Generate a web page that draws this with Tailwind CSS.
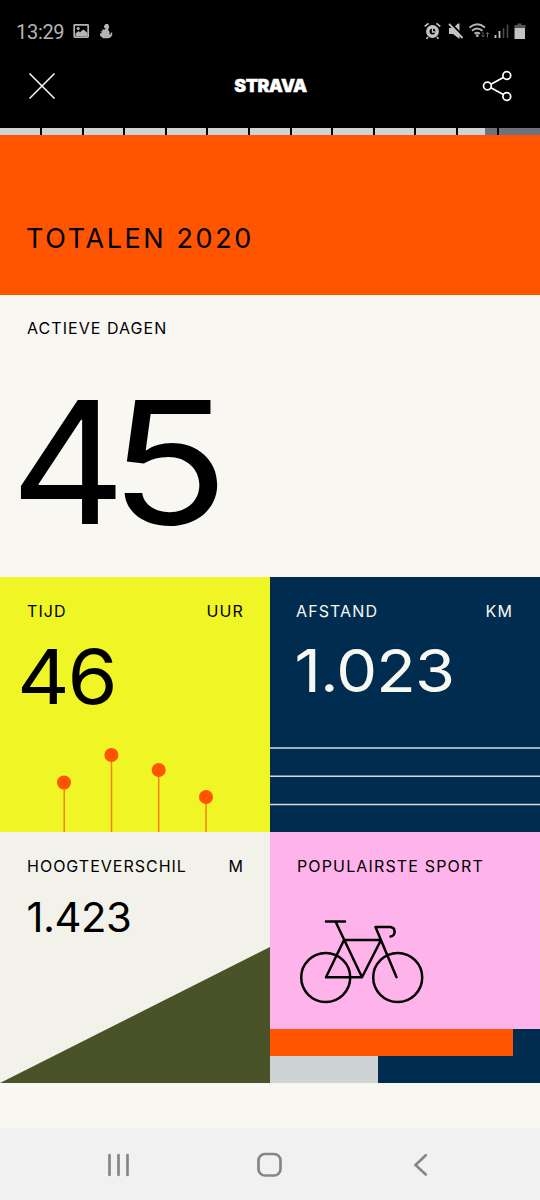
<!DOCTYPE html>
<html lang="nl">
<head>
<meta charset="utf-8">
<meta name="viewport" content="width=device-width">
<title>Strava – Totalen 2020</title>
<script src="https://cdn.jsdelivr.net/npm/@tailwindcss/browser@4"></script>
</head>
<body class="bg-[#f8f7f2]">
<div class="w-[540px] h-[1200px] flex flex-col overflow-hidden bg-[#f8f7f2] text-black font-['Inter',sans-serif] whitespace-nowrap">
  <!-- status bar -->
  <div class="h-[60px] shrink-0 bg-black flex justify-between pl-4 pr-[14px] text-[#b4b4b4]">
    <div class="flex">
      <span class="font-['Roboto',sans-serif] text-[20px] leading-[24px] mt-[20px] w-[56px] tracking-[-0.3px]">13:29</span>
      <svg class="mt-[23px] ml-px" width="17" height="16" viewBox="0 0 17 16"><rect x="1.2" y="1.9" width="14" height="12.3" rx=".6" fill="none" stroke="currentColor" stroke-width="1.7"/><path d="M2.5 12v-1.5l3-2.5 1.5 1.3L10.500 6.500l4 3.500v3h-12z" fill="currentColor"/><circle cx="5.200" cy="5.500" r="1.500" fill="currentColor"/></svg>
      <svg class="mt-[23px] ml-[9px]" width="14" height="16" viewBox="0 0 14 16"><path d="M5 3 6.500 1h2.500l1 2v2L9 6.500 10.500 9v2.500h1l.5-2 1.200 0v2.500L11.500 14.500 9 15.200H4L1 12.500V10.500L3 10 1.500 8.500 3.500 8 3 6.500 6 6.500 6.500 5.500 5 4.500z" fill="currentColor"/></svg>
    </div>
    <svg class="mt-[20px]" width="104" height="22" viewBox="0 0 104 22" fill="none">
      <g stroke="#c4c4c4"><circle cx="10.500" cy="11.500" r="4.700" stroke-width="3.400"/><path d="M10.500 8v4h3" stroke-width="1.300"/><path d="M2.700 6.300 6.500 3.300M18.300 6.300 14.500 3.300M6 17l-1.500 1.700M15 17l1.500 1.700" stroke-width="1.700"/></g>
      <path d="M27 8h4l5-4.500h1.500v15.500L31 14h-4z" fill="#c4c4c4"/><path d="M28.500 3 42.500 17.500" stroke="#000" stroke-width="2"/><path d="M27 3.800 40.500 18" stroke="#c4c4c4" stroke-width="1.900"/>
      <g stroke="#b4b4b4" stroke-width="1.900"><path d="M47.500 7.500q7.500-6.500 15.500 0M50 10.700q5-4.500 10.500 0M52.500 13.800q2.700-2.300 5.500 0"/></g><circle cx="55.300" cy="15.700" r="1.400" fill="#b4b4b4"/>
      <path d="M61 12v5M59.500 15.500 61 17l1.500-1.500M65.500 17.500v-5M64 14l1.500-1.500L67 14" stroke="#666"/>
      <path d="M73.500 15v3M77.500 11v7" stroke="#c4c4c4" stroke-width="1.800"/><path d="M81.500 8V18M85.500 4.500V18" stroke="#4b4b4b" stroke-width="1.600"/>
      <path d="M92.500 5h3V3.500h4V5h4v3h-11z" fill="#555"/><path d="M92.500 8h10.500v11H92.500z" fill="#c4c4c4"/>
    </svg>
  </div>
  <!-- app bar -->
  <header class="h-[68px] shrink-0 bg-black text-white flex justify-between pl-[28px] pr-[28px]">
    <svg class="mt-[12px]" width="28" height="28" viewBox="0 0 28 28"><path d="M1.500 1.500 26.500 26.500M26.500 1.500 1.500 26.500" stroke="#fff" stroke-width="1.500"/></svg>
    <div class="mt-[16px] ml-[5px] text-[17.500px] leading-[20px] font-black tracking-[-0.5px] scale-x-102 [-webkit-text-stroke:0.4px_white]">STRAVA</div>
    <svg class="mt-[10px]" width="32" height="32" viewBox="0 0 32 32" fill="none" stroke="#fff" stroke-width="1.700"><circle cx="7.400" cy="16" r="3.900"/><circle cx="26.800" cy="5.500" r="3.900"/><circle cx="26.800" cy="26.500" r="3.900"/><path d="M10.900 14.200 23.300 7.400M10.900 17.800l12.400 6.800"/></svg>
  </header>
  <!-- story progress -->
  <div class="h-[7px] w-[541px] pl-[0.500px] shrink-0 grid grid-cols-13 bg-[#ced4d3]">
    <i class="border-r-2 border-black"></i><i class="border-r-2 border-black"></i><i class="border-r-2 border-black"></i><i class="border-r-2 border-black"></i><i class="border-r-2 border-black"></i><i class="border-r-2 border-black"></i><i class="border-r-2 border-black"></i><i class="border-r-2 border-black"></i><i class="border-r-2 border-black"></i><i class="border-r-2 border-black"></i><i class="border-r-2 border-black"></i><i class="border-r-2 border-black flex justify-end"><b class="w-[12.500px] bg-[#71707d]"></b></i><i class="bg-[#71707d]"></i>
  </div>
  <section class="h-[160px] shrink-0 bg-[#ff5400] pt-[90px] pl-[26px]">
    <h1 class="text-[27px] leading-none font-normal tracking-[2.600px]">TOTALEN 2020</h1>
  </section>
  <section class="h-[282px] shrink-0 pt-[25px]">
    <h2 class="pl-[27px] text-[16px] leading-none tracking-[1.050px]">ACTIEVE DAGEN</h2>
    <div class="mt-[41px] pl-[10px] text-[170px] leading-none tracking-[-6px] origin-left scale-x-105">4<span class="inline-block origin-right scale-x-110">5</span></div>
  </section>
  <main class="grid grid-cols-2 shrink-0">
    <section class="h-[255px] bg-[#f0f525] pt-[26px]">
      <div class="flex justify-between pl-[27px] pr-[26px] text-[16px] leading-none tracking-[1.100px]"><h2>TIJD</h2><span>UUR</span></div>
      <div class="mt-[20px] pl-[16px] text-[75px] leading-none tracking-[-2px] origin-left scale-x-108">46</div>
      <svg class="mt-[27px]" width="270" height="91" viewBox="0 0 270 91" fill="#ff5400"><path d="M64.200 41v50M111.500 14v77M158.700 29v62M206 56v35" stroke="#f58313" stroke-width="1.500"/><circle cx="64" cy="41.500" r="7"/><circle cx="111.400" cy="14" r="7"/><circle cx="158.700" cy="29" r="7"/><circle cx="206" cy="56" r="7"/></svg>
    </section>
    <section class="h-[255px] bg-[#002d4f] text-[#f8f7f2] pt-[26px]">
      <div class="flex justify-between pl-[26px] pr-[27px] text-[16px] leading-none tracking-[1.100px]"><h2>AFSTAND</h2><span>KM</span></div>
      <div class="mt-[22px] pl-[22.500px] text-[59.500px] leading-none tracking-[-0.800px] origin-left scale-x-109">1.023</div>
      <svg class="mt-[40.500px]" width="270" height="70" viewBox="0 0 270 70" fill="none" stroke="#d5dadd" stroke-width="1.400"><path d="M0 7h270M0 35.200h270M0 63.500h270"/></svg>
    </section>
    <section class="h-[251px] bg-[#f2f2eb] pt-[26px]">
      <div class="flex justify-between pl-[27px] pr-[26px] text-[16px] leading-none tracking-[1px]"><h2>HOOGTEVERSCHIL</h2><span>M</span></div>
      <div class="mt-[23px] pl-[26px] text-[41px] leading-none tracking-[-0.5px] origin-left scale-x-102">1.423</div>
      <svg class="mt-[8px]" width="270" height="137" viewBox="0 0 270 137"><path d="M0 137 270 1v136z" fill="#4a5328"/></svg>
    </section>
    <section class="h-[251px] bg-[#ffb3eb] pt-[26px] flex flex-col">
      <h2 class="pl-[27px] text-[16px] leading-none tracking-[1.150px]">POPULAIRSTE SPORT</h2>
      <svg class="mt-[42px] ml-[28px]" width="128" height="90" viewBox="0 0 128 90" fill="none" stroke="#000" stroke-width="2.500" stroke-linecap="round" stroke-linejoin="round"><circle cx="27.700" cy="61.500" r="24.500"/><circle cx="99.700" cy="61.500" r="24.500"/><path d="M28 5.500H47M37.500 5.500 64 61.200H28L46 24H83L64 61.200M98.500 61.200 77.500 11H92.500a4.800 4.800 0 0 1 0 9.500"/></svg>
      <div class="mt-auto h-[54px] bg-[#002d4f]"><div class="h-[27px] w-[243px] bg-[#ff5400]"></div><div class="h-[27px] w-[108px] bg-[#ced4d3]"></div></div>
    </section>
  </main>
  <!-- navigation bar -->
  <nav class="mt-auto h-[72px] shrink-0 bg-[#f1f1f1] flex justify-between pl-[106px] pr-[108px] pt-[24px]">
    <svg width="25" height="26" viewBox="0 0 25 26"><path d="M3.500 3v20M12.500 3v20M21.500 3v20" stroke="#868686" stroke-width="2.700" stroke-linecap="round"/></svg>
    <svg width="26" height="26" viewBox="0 0 26 26"><rect x="2.500" y="2" width="22" height="21.500" rx="6.500" fill="none" stroke="#868686" stroke-width="2.700"/></svg>
    <svg width="25" height="26" viewBox="0 0 25 26"><path d="M18.800 3.200 8.500 13 18.800 22.500" fill="none" stroke="#868686" stroke-width="2.600" stroke-linecap="round"/></svg>
  </nav>
</div>
</body>
</html>
